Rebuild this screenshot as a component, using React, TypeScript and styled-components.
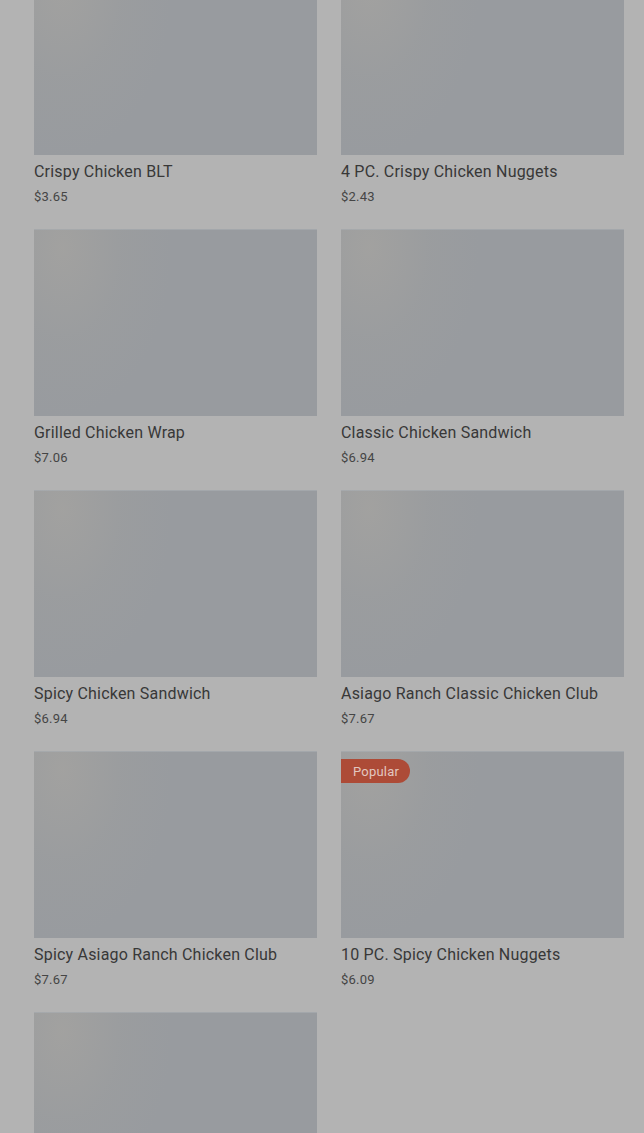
import styled, { createGlobalStyle } from 'styled-components'

const GlobalStyle = createGlobalStyle`
  html, body {
    margin: 0;
    padding: 0;
    background: #b3b3b3;
    overflow: hidden;
  }
  body {
    font-family: Roboto, "Liberation Sans", sans-serif;
  }
`

const Page = styled.div`
  height: 1133px;
  overflow: hidden;
  background: #b3b3b3;
`

const Grid = styled.div`
  display: grid;
  grid-template-columns: 283px 283px;
  column-gap: 24px;
  row-gap: 22px;
  padding-left: 34px;
  margin-top: -32px;
`

const Card = styled.div`
  display: flex;
  flex-direction: column;
`

const Thumb = styled.div`
  position: relative;
  height: 187px;
  background:
    radial-gradient(ellipse 110px 170px at 10% 10%, rgba(166, 164, 160, 0.7) 0%, rgba(160, 160, 158, 0.3) 55%, rgba(152, 155, 159, 0) 100%),
    #989b9f;
  box-shadow: inset 0 1px 0 rgba(170, 175, 180, 0.6);
`

const Badge = styled.span`
  position: absolute;
  top: 8px;
  left: 0;
  height: 24px;
  padding: 0 11px 0 12px;
  display: flex;
  align-items: center;
  background: #ad4b37;
  color: #e2c7c0;
  font-size: 13px;
  letter-spacing: 0.2px;
  border-radius: 0 12px 12px 0;
`

const Title = styled.div`
  margin-top: 5px;
  font-size: 16px;
  line-height: 24px;
  letter-spacing: 0.2px;
  color: #383838;
  white-space: nowrap;
`

const Price = styled.div`
  margin-top: 3px;
  font-size: 13px;
  line-height: 20px;
  letter-spacing: 0.2px;
  color: #454545;
`

type Item = { title?: string; price?: string; popular?: boolean }

const items: Item[] = [
  { title: 'Crispy Chicken BLT', price: '$3.65' },
  { title: '4 PC. Crispy Chicken Nuggets', price: '$2.43' },
  { title: 'Grilled Chicken Wrap', price: '$7.06' },
  { title: 'Classic Chicken Sandwich', price: '$6.94' },
  { title: 'Spicy Chicken Sandwich', price: '$6.94' },
  { title: 'Asiago Ranch Classic Chicken Club', price: '$7.67' },
  { title: 'Spicy Asiago Ranch Chicken Club', price: '$7.67' },
  { title: '10 PC. Spicy Chicken Nuggets', price: '$6.09', popular: true },
  {}
]

const App = () => (
  <>
    <GlobalStyle />
    <Page>
      <Grid>
        {items.map((item, i) => (
          <Card key={i}>
            <Thumb>{item.popular && <Badge>Popular</Badge>}</Thumb>
            {item.title && <Title>{item.title}</Title>}
            {item.price && <Price>{item.price}</Price>}
          </Card>
        ))}
      </Grid>
    </Page>
  </>
)

export default App
